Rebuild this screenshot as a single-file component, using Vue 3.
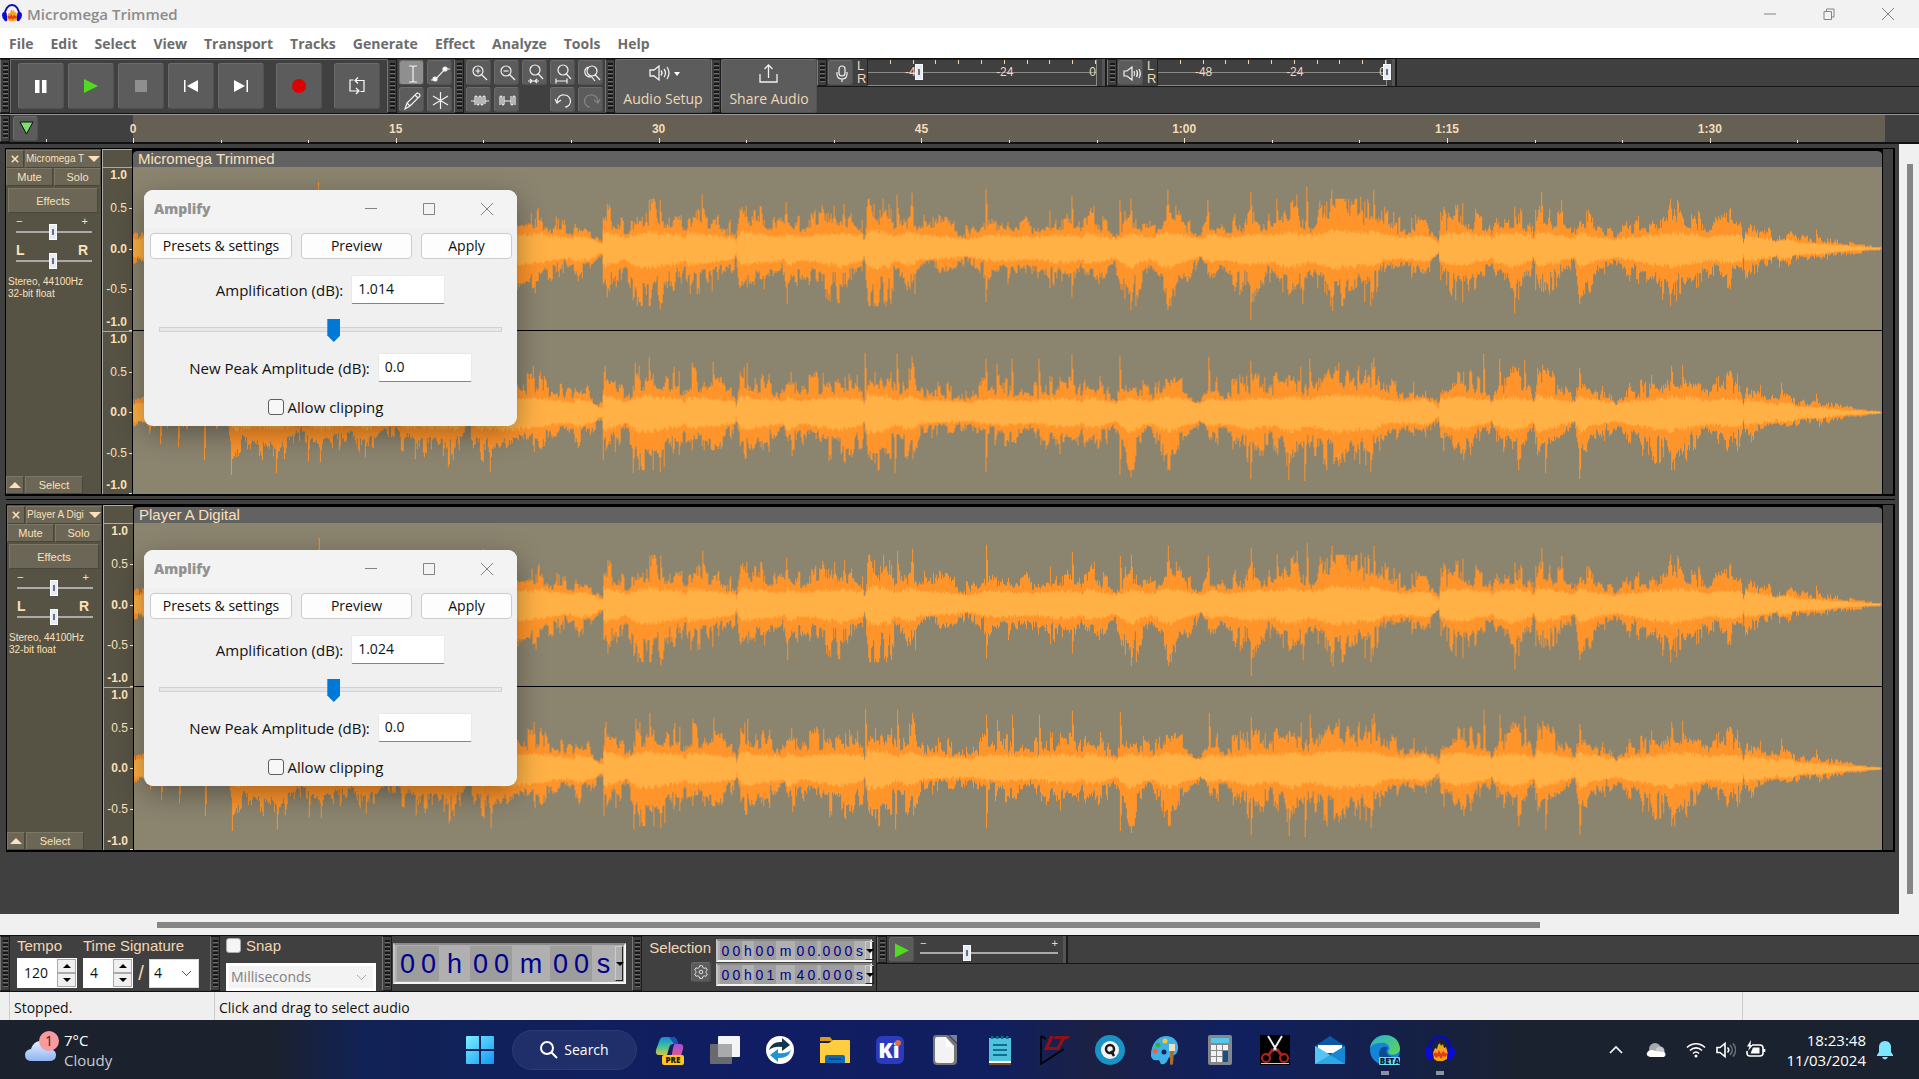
<template>
  <div class="desktop">
    <header class="title-bar">
      <svg class="app-icon" viewBox="0 0 30 30" v-html="icons.audacity"></svg>
      <h1 class="title">Micromega Trimmed</h1>
      <div class="window-buttons">
        <button aria-label="Minimize"><svg viewBox="0 0 12 12"><path d="M0 6h12" /></svg></button>
        <button aria-label="Restore"><svg viewBox="0 0 12 12"><path d="M1 3.500h7.500v8H1zM3.500 3V1h7.500v8H9" /></svg></button>
        <button aria-label="Close"><svg viewBox="0 0 12 12"><path d="M0 0l12 12M12 0L0 12" /></svg></button>
      </div>
    </header>

    <nav class="menu">
      <button v-for="item in menu" :key="item">{{ item }}</button>
    </nav>

    <section class="dock dock-top">
      <div class="grip"></div>
      <div class="bar transport">
        <button v-for="b in transport" :key="b.name" :aria-label="b.name" :class="b.name">
          <svg viewBox="0 0 24 24" v-html="b.svg"></svg>
        </button>
      </div>
      <div class="grip"></div>
      <div class="bar tools tools-two">
        <button v-for="t in tools" :key="t.name" :aria-label="t.name" :class="{ active: t.active }">
          <svg viewBox="0 0 25 25" v-html="t.svg"></svg>
        </button>
      </div>
      <div class="grip"></div>
      <div class="bar tools tools-five">
        <template v-for="t in editTools" :key="t.name">
          <span v-if="!t.svg"></span>
          <button v-else :aria-label="t.name" :class="{ disabled: t.disabled }">
            <svg viewBox="0 0 25 25" v-html="t.svg"></svg>
          </button>
        </template>
      </div>
      <div class="grip"></div>
      <button class="wide-button">
        <svg viewBox="0 0 40 24"><g v-html="speaker"></g><path class="solid" d="M31 11h6l-3 4z" /></svg>
        <span>Audio Setup</span>
      </button>
      <div class="grip"></div>
      <button class="wide-button">
        <svg viewBox="0 0 40 24"><path d="M11 13v8h17v-8M19.500 17V4M15.500 8l4-4 4 4" /></svg>
        <span>Share Audio</span>
      </button>
      <div class="meters">
        <div v-for="m in meters" :key="m.name" class="meter">
          <div class="grip"></div>
          <button class="meter-button" :aria-label="m.name"><svg viewBox="0 0 25 25" v-html="m.svg"></svg></button>
          <div class="channels"><span>L</span><span>R</span></div>
          <div class="meter-scale">
            <span v-for="n in 10" :key="n" class="meter-cell">
              <b v-if="meterLabels[n]">{{ meterLabels[n] }}</b>
            </span>
            <input type="range" min="0" max="100" :value="m.value" :aria-label="m.name + ' level'" />
          </div>
          <div class="meter-end"></div>
        </div>
      </div>
    </section>

    <section class="timeline">
      <div class="grip"></div>
      <button class="pin" aria-label="Playhead">
        <svg viewBox="0 0 25 25"><path d="M6 5h13l-6.500 12z" /></svg>
      </button>
      <div class="pre-roll"></div>
      <div class="time-scale">
        <div v-for="n in 20" :key="n" class="time-cell" :class="{ major: n % 3 === 1 }">
          <span v-if="n % 3 === 1">{{ times[(n - 1) / 3] }}</span>
        </div>
      </div>
      <div class="post-roll"></div>
    </section>

    <main class="workspace">
      <div class="tracks">
        <article v-for="track in tracks" :key="track.name" class="track">
          <div class="panel">
            <div class="panel-row">
              <button class="close" aria-label="Close track">
                <svg viewBox="0 0 10 10"><path d="M1 1l8 8M9 1L1 9" /></svg>
              </button>
              <button class="name"><span>{{ track.short }}</span><i></i></button>
            </div>
            <div class="panel-row">
              <button class="half">Mute</button>
              <button class="half">Solo</button>
            </div>
            <button class="effects">Effects</button>
            <div class="slider-labels"><span>−</span><span>+</span></div>
            <input class="knob" type="range" value="48" aria-label="Gain" />
            <div class="slider-labels pan"><span>L</span><span>R</span></div>
            <input class="knob" type="range" value="48" aria-label="Pan" />
            <p class="info">Stereo, 44100Hz<br />32-bit float</p>
            <div class="panel-row panel-foot">
              <button class="collapse" aria-label="Collapse"><i></i></button>
              <button class="select">Select</button>
            </div>
          </div>
          <div class="ruler">
            <div class="ruler-top"></div>
            <div v-for="c in 2" :key="c" class="ruler-scale">
              <span v-for="v in levels" :key="v" :class="{ strong: !v.includes('.5') }">{{ v }}</span>
            </div>
          </div>
          <div class="clip">
            <h2 class="clip-name">{{ track.name }}</h2>
            <svg v-for="(w, i) in waves" :key="i" class="wave" viewBox="0 -82 1750 164" preserveAspectRatio="none">
              <path class="peak" :d="w.peak" />
              <path class="rms" :d="w.rms" />
            </svg>
          </div>
        </article>
      </div>
      <div class="v-scroll"><div class="v-thumb"></div></div>
    </main>
    <div class="h-scroll"><div class="h-thumb"></div></div>

    <section class="dock dock-bottom">
      <div class="grip"></div>
      <div class="bar signature">
        <div class="field">
          <label for="tempo">Tempo</label>
          <div class="spin tempo">
            <input id="tempo" type="text" value="120" />
            <div class="arrows"><button aria-label="Up"><i></i></button><button aria-label="Down"><i class="down"></i></button></div>
          </div>
        </div>
        <div class="field">
          <label for="beats">Time Signature</label>
          <div class="spin-row">
            <div class="spin">
              <input id="beats" type="text" value="4" />
              <div class="arrows"><button aria-label="Up"><i></i></button><button aria-label="Down"><i class="down"></i></button></div>
            </div>
            <span class="slash">/</span>
            <select class="combo" aria-label="Note value"><option>4</option></select>
          </div>
        </div>
      </div>
      <div class="grip"></div>
      <div class="bar snap">
        <label><input type="checkbox" /><span>Snap</span></label>
        <select class="combo" disabled aria-label="Snap to"><option>Milliseconds</option></select>
      </div>
      <div class="grip"></div>
      <div class="bar clock">
        <div class="time-field large">
          <span v-for="(c, i) in clock" :key="i" :class="c.kind">{{ c.text }}</span>
          <button aria-label="Format"><i class="down"></i></button>
        </div>
      </div>
      <div class="grip"></div>
      <div class="bar selection">
        <div class="selection-side">
          <span>Selection</span>
          <button aria-label="Selection settings">
            <svg viewBox="0 0 20 20"><path :d="gear" /><circle cx="10" cy="10" r="2" /></svg>
          </button>
        </div>
        <div class="selection-times">
          <div v-for="(row, r) in selection" :key="r" class="time-field small">
            <span v-for="(c, i) in row" :key="i" :class="c.kind">{{ c.text }}</span>
            <button aria-label="Format"><i class="down"></i></button>
          </div>
        </div>
      </div>
      <div class="play-speed">
        <div class="play-row">
          <div class="grip"></div>
          <button class="small-play" aria-label="Play at speed"><svg viewBox="0 0 25 25"><path d="M5 5.500v14l14-7z" /></svg></button>
          <div class="speed">
            <div class="slider-labels"><span>−</span><span>+</span></div>
            <input class="knob" type="range" value="33" aria-label="Playback speed" />
          </div>
          <div class="meter-end"></div>
        </div>
      </div>
    </section>

    <footer class="status">
      <span class="status-a">Stopped.</span>
      <span class="status-b">Click and drag to select audio</span>
      <span class="status-c"></span>
    </footer>

    <footer class="taskbar">
      <div class="weather">
        <svg viewBox="0 0 36 36" v-html="icons.weather"></svg>
        <p>7°C<br /><span>Cloudy</span></p>
      </div>
      <div class="apps">
        <button aria-label="Start"><svg viewBox="0 0 30 30" v-html="icons.start"></svg></button>
        <button class="search">
          <svg viewBox="0 0 18 18"><circle cx="7" cy="7" r="6" /><path d="M11.500 11.500L17 17" /></svg>
          <span>Search</span>
        </button>
        <button v-for="a in apps" :key="a" :aria-label="a" :class="{ running: a === 'edge' || a === 'audacity' }">
          <svg viewBox="0 0 30 30" v-html="icons[a]"></svg>
        </button>
      </div>
      <div class="tray">
        <svg viewBox="0 0 20 20"><path d="M4 13l6-6 6 6" /></svg>
        <svg viewBox="0 0 20 20" class="cloud"><circle cx="9" cy="9" r="6" fill="#a9a9ad" /><circle cx="14" cy="11" r="4.500" fill="#c8c8cc" /><path d="M1 13c1-3 5-4 8-2l9 1c3 2 1 5-1 5H5c-3 0-5-2-4-4z" fill="#fff" /></svg>
        <svg viewBox="0 0 20 20"><path d="M1 7.500c5-5 13-5 18 0M4 10.500c3.500-3.500 8.500-3.500 12 0M7 13.500c2-2 4-2 6 0" /><circle class="fill" cx="10" cy="16" r="1.500" /></svg>
        <svg viewBox="0 0 20 20"><path d="M1 7.500h3l5-4v13l-5-4H1zM11.500 7.500c1.500 1.500 1.500 3.500 0 5" /><path class="faint" d="M14 5c3 3 3 7 0 10M17 3.500c3.500 4 3.500 9 0 13" /></svg>
        <svg viewBox="0 0 20 20"><path d="M6 5h8q3 0 3 3v5q0 3-3 3H4q-3 0-3-3v-2M18.500 9v3" /><path class="fill" d="M7 7.500h6.500v6H4.500zM5 0L1 6.500h2.500L2 11l5-6H4.500z" /></svg>
        <p>18:23:48<br />11/03/2024</p>
        <svg viewBox="0 0 20 20" class="bell"><path d="M10 1c4 0 6 3 6 6v5l2 3v1H2v-1l2-3V7c0-3 2-6 6-6zM7 17h6q-3 5-6 0z" /></svg>
      </div>
    </footer>

    <form v-for="(d, i) in dialogs" :key="i" class="dialog" :class="'dialog-' + i">
      <div class="dialog-title">
        <strong>Amplify</strong>
        <button type="button" aria-label="Minimize"><svg viewBox="0 0 12 12"><path d="M0 5.500h12" /></svg></button>
        <button type="button" aria-label="Maximize"><svg viewBox="0 0 12 12"><path d="M.5.5h11v11H.5z" /></svg></button>
        <button type="button" aria-label="Close"><svg viewBox="0 0 12 12"><path d="M0 0l12 12M12 0L0 12" /></svg></button>
      </div>
      <div class="dialog-buttons">
        <button type="button">Presets &amp; settings</button>
        <button type="button">Preview</button>
        <button type="button">Apply</button>
      </div>
      <label class="dialog-row">Amplification (dB): <input type="text" :value="d.gain" /></label>
      <input class="gain" type="range" value="51" aria-label="Gain" />
      <label class="dialog-row">New Peak Amplitude (dB): <input type="text" value="0.0" /></label>
      <label class="dialog-check"><input type="checkbox" /><span>Allow clipping</span></label>
    </form>
  </div>
</template>

<script setup>
const menu = ['File', 'Edit', 'Select', 'View', 'Transport', 'Tracks', 'Generate', 'Effect', 'Analyze', 'Tools', 'Help']
const times = ['0', '15', '30', '45', '1:00', '1:15', '1:30']
const levels = ['1.0', '0.5', '0.0', '-0.5', '-1.0']
const meterLabels = { 2: '-48', 6: '-24', 10: '0' }

const transport = [
  { name: 'pause', svg: '<path fill="#fff" d="M6 6h4.500v13H6zM13 6h4.500v13H13z"/>' },
  { name: 'play', svg: '<path fill="#52d921" d="M5 5v14l14-7z"/>' },
  { name: 'stop', svg: '<path fill="#8f8f8f" d="M6 6h12v12H6z"/>' },
  { name: 'start', svg: '<path fill="#fff" d="M5 6h1.500v12H5zM19 6v12L8 12z"/>' },
  { name: 'end', svg: '<path fill="#fff" d="M17.500 6H19v12h-1.500zM5 6v12l11-6z"/>' },
  { name: 'record', svg: '<circle cx="12" cy="12" r="7" fill="#dc0000"/>' },
  { name: 'loop', svg: '<path fill="none" stroke="#fff" stroke-width="1.200" d="M8.500 6H5v11h8M11 14l3 3-3 3M15.500 17.500H19v-11h-8M13 3.500l-3 3 3 3"/>' }
]

const tools = [
  { name: 'Selection', active: true, svg: '<path d="M9 5h3l1 1 1-1h3M13 6v14M9 21h3l1-1 1 1h3"/>' },
  { name: 'Envelope', svg: '<path d="M3 19h4L17 8h5"/><circle cx="7" cy="18" r="2" fill="#fff"/><circle cx="17" cy="8" r="2" fill="#fff"/>' },
  { name: 'Draw', svg: '<path d="M5 21l2-6L17 5q3 0 3 3L10 18zM7 15l3 3M15 7l3 3"/>' },
  { name: 'Multi', svg: '<path d="M12.500 4v17M5 8l15 9M20 8L5 17"/>' }
]

const lens = '<circle cx="11" cy="10" r="5"/><path d="M14.500 13.500L20 19"/>'
const smallLens = '<circle cx="12" cy="9" r="5"/><path d="M15 12.500l5 5.500"/>'
const editTools = [
  { name: 'Zoom in', svg: lens + '<path d="M8.500 10h5M11 7.500v5"/>' },
  { name: 'Zoom out', svg: lens + '<path d="M8.500 10h5"/>' },
  { name: 'Fit selection', svg: smallLens + '<path d="M5 20h11M7 18l2 2-2 2M14 18l-2 2 2 2"/>' },
  { name: 'Fit project', svg: smallLens + '<path d="M5 20h11M5 17.500v5M16 17.500v5"/>' },
  { name: 'Zoom toggle', svg: '<circle cx="13" cy="10" r="5"/><path d="M9 6q-4 2-3 6t6 4M16 13.500l5 5.500M12 15l4 5"/>' },
  { name: 'Trim', svg: '<path d="M4 13h4M18 13h4M8 17V9q1-2 2 0v7q1 2 2 0V9q1-2 2 0v7q1 2 2 0V9q1-2 2 0v7"/>' },
  { name: 'Silence', svg: '<path d="M5 17V9q1-2 2 0v7q1 2 2 0V8v5h7V8v8q1 2 2 0V9q1-2 2 0v8"/>' },
  { name: 'gap' },
  { name: 'Undo', svg: '<path d="M6 14c0-5 4-8 8-7 6 1 7 8 3 11-1 1-2 1-3 1M4 11l2 4 4-3"/>' },
  { name: 'Redo', disabled: true, svg: '<path d="M19 14c0-5-4-8-8-7-6 1-7 8-3 11 1 1 2 1 3 1M21 11l-2 4-4-3"/>' }
]

const speaker = '<path d="M7 9h4l5-4v14l-5-4H7zM18 9.500q2 2.500 0 5M21 8q3 4 0 8M24 6q4 6 0 12"/>'
const meters = [
  { name: 'Record', value: 19, svg: '<rect x="10" y="5" width="6" height="10" rx="3"/><path d="M8 11v2q0 5 5 5t5-5v-2M13 18v3"/>' },
  { name: 'Playback', value: 100, svg: '<path d="M5 10h3l5-4v13l-5-4H5zM15 10q1 2.500 0 5M17.500 9q2 3.500 0 7M20 8q2.500 4.500 0 9"/>' }
]

const tracks = [
  { name: 'Micromega Trimmed', short: 'Micromega T' },
  { name: 'Player A Digital', short: 'Player A Digi' }
]
const dialogs = [{ gain: '1.014' }, { gain: '1.024' }]

// Split a time string into digit cells and unit cells
function cells(text) {
  return [...text].map(c => ({ text: c, kind: /\d/.test(c) ? 'digit' : c === '.' ? 'dot' : 'unit unit-' + c }))
}
const clock = cells('00h00m00s')
const selection = [cells('00h00m00.000s'), cells('00h01m40.000s')]

const gear = 'M8.500 3h3l.5 2 1.500 1 2-.7 1.500 2.600-1.500 1.500v1.400l1.500 1.500-1.500 2.500-2-.6-1.500.9-.5 2h-3l-.5-2-1.500-.9-2 .6L3 12.300l1.500-1.500V9.400L3 7.900l1.500-2.600 2 .7L8 5z'

// Loudness envelope: [x, above, below], in units of the wave viewBox
const envelope = [
  [0, 15, 14], [12, 18, 16], [30, 12, 12], [95, 16, 14], [99, 36, 44], [125, 32, 34], [145, 28, 40], [170, 20, 22],
  [188, 38, 42], [215, 28, 24], [232, 30, 38], [262, 20, 20], [272, 30, 34], [300, 32, 36], [320, 36, 42], [336, 20, 18],
  [345, 32, 40], [375, 40, 42], [387, 30, 38], [407, 32, 30], [427, 23, 20], [440, 16, 18], [442, 28, 30], [457, 20, 20],
  [466, 9, 9], [469, 9, 9], [470, 38, 42],
  [482, 34, 32], [492, 19, 20], [504, 32, 48], [517, 40, 50], [527, 34, 42], [547, 32, 32], [552, 18, 20], [554, 36, 40],
  [567, 35, 34], [582, 28, 30], [601, 20, 19], [603, 9, 8], [608, 40, 42], [632, 29, 30], [651, 22, 22], [654, 34, 42],
  [667, 23, 24], [682, 30, 28], [707, 34, 45],
  [729, 26, 26], [731, 12, 12], [735, 45, 52], [757, 35, 45], [761, 24, 26], [779, 40, 42], [787, 27, 20], [812, 23, 17],
  [837, 16, 12],
  [852, 28, 22], [872, 28, 26], [902, 22, 20], [923, 29, 32], [942, 28, 30], [950, 20, 20], [953, 34, 36], [967, 28, 30],
  [982, 14, 14], [997, 34, 52],
  [1017, 20, 20], [1035, 38, 50], [1052, 28, 30], [1067, 14, 12], [1077, 32, 30], [1092, 22, 24], [1117, 30, 40],
  [1140, 30, 28], [1157, 38, 50], [1177, 28, 30], [1202, 46, 50], [1232, 38, 42], [1239, 40, 46], [1252, 30, 22],
  [1272, 22, 19], [1292, 26, 26], [1306, 8, 7], [1308, 30, 30], [1327, 36, 42], [1342, 29, 30], [1357, 26, 20],
  [1359, 14, 14], [1363, 30, 30],
  [1382, 34, 48], [1397, 28, 26], [1401, 14, 12], [1405, 42, 48], [1424, 30, 30], [1442, 18, 14], [1447, 38, 50],
  [1460, 26, 28], [1482, 13, 14], [1497, 22, 24], [1522, 28, 38], [1539, 36, 46], [1557, 34, 36], [1577, 22, 22],
  [1597, 32, 32], [1609, 26, 26], [1611, 10, 10], [1613, 26, 28], [1632, 18, 16], [1645, 11, 11], [1647, 16, 18],
  [1667, 10, 10], [1687, 9, 10], [1707, 6, 6], [1727, 4, 4], [1740, 2, 2], [1750, 1, 1]
]
const spikes = [
  {
    up: { 185: 67, 349: 56, 516: 49, 527: 49, 569: 54, 653: 47, 764: 54, 779: 56, 853: 60, 939: 53, 987: 49, 998: 50, 1035: 59, 1075: 49, 1118: 57, 1144: 50, 1164: 54, 1174: 62, 1199: 59, 1228: 52, 1241: 59, 1323: 44, 1382: 42, 1409: 57, 1429: 49, 1597: 39, 1684: 19 },
    down: { 527: 61, 737: 58, 853: 54, 939: 49, 998: 62, 1035: 62, 1118: 72, 1170: 56, 1200: 63, 1238: 58, 1382: 65, 1447: 56 }
  },
  {
    up: { 348: 56, 400: 47, 502: 50, 516: 56, 580: 51, 732: 60, 764: 59, 779: 56, 853: 54, 864: 49, 879: 54, 906: 54, 939: 58, 987: 57, 1076: 56, 1118: 52, 1177: 54, 1241: 55, 1351: 59, 1367: 54, 1392: 53, 1447: 45, 1550: 48, 1597: 42, 1649: 30, 1684: 19 },
    down: { 27: 32, 45: 35, 71: 48, 98: 63, 143: 61, 175: 49, 187: 50, 232: 45, 320: 48, 357: 60, 500: 61, 527: 60, 762: 61, 853: 60, 987: 63, 998: 65, 1118: 67, 1156: 68, 1172: 69, 1238: 60, 1413: 61, 1447: 67, 1542: 58 }
  }
]

function random(seed) {
  let s = seed
  return () => {
    s = (s * 1664525 + 1013904223) % 4294967296
    return s / 4294967296
  }
}

function level(x, side) {
  let i = 1
  while (envelope[i][0] < x) i++
  const a = envelope[i - 1]
  const b = envelope[i]
  const t = (x - a[0]) / (b[0] - a[0])
  return a[side] + (b[side] - a[side]) * t
}

function outline(top, bottom) {
  let d = 'M0 0'
  top.forEach((v, x) => { d += `V${-v}H${x + 1}` })
  for (let x = bottom.length - 1; x >= 0; x--) d += `V${bottom[x]}H${x}`
  return d + 'Z'
}

function makeWave(seed, spike) {
  const next = random(seed)
  const peaks = [[], []]
  const rms = [[], []]
  const swell = [1, 1]
  for (let x = 0; x < 1750; x++) {
    const turn = next() > 0.6
    const sides = [spike.up, spike.down]
    const burst = next() > 0.93 ? 1.35 : 1
    for (let s = 0; s < 2; s++) {
      const base = level(x, s + 1)
      const roll = next()
      if (turn) swell[s] = 0.6 + roll * 0.5 + (roll > 0.8 ? 0.15 : 0)
      const limit = Math.min(base * 1.4, s ? 58 : 50)
      let v = Math.min(base * swell[s] * burst * (0.88 + next() * 0.24), limit)
      if (sides[s][x]) v = sides[s][x]
      else if (sides[s][x - 1]) v = Math.max(v, sides[s][x - 1] * 0.75)
      peaks[s].push(Math.round(v))
      rms[s].push(Math.round(Math.min(v * 0.9, (base * 0.28 + 5) * (base < 12 ? base / 14 : 1) * (0.88 + next() * 0.28))))
    }
  }
  return { peak: outline(peaks[0], peaks[1]), rms: outline(rms[0], rms[1]) }
}
const waves = [makeWave(17, spikes[0]), makeWave(91, spikes[1])]

const apps = ['copilot', 'taskview', 'sync', 'folder', 'kicad', 'office', 'notepad', 'spice', 'quiet', 'paint', 'calc', 'snip', 'mail', 'edge', 'audacity']
const icons = {
  weather: '<defs><linearGradient id="wc" x2="0" y2="1"><stop stop-color="#e6efff"/><stop offset="1" stop-color="#8fb4f2"/></linearGradient></defs><path fill="url(#wc)" d="M8 31q-7 0-7-6 0-5 6-6 3-9 11-8 7 1 8 8 6 1 6 6 0 6-7 6z"/><circle cx="25" cy="11" r="10" fill="#f99a9f"/><text x="25" y="16" font-size="14" text-anchor="middle" fill="#3b1d22" font-family="Open Sans, sans-serif">1</text>',
  start: '<defs><linearGradient id="st" x2="1" y2="1"><stop stop-color="#7df0ff"/><stop offset="1" stop-color="#1295f5"/></linearGradient></defs><path fill="url(#st)" d="M2 1h12v13H1V2q0-1 1-1zM16 1h12q1 0 1 1v12H16zM1 16h13v13H2q-1 0-1-1zM16 16h13v12q0 1-1 1H16z"/>',
  copilot: '<defs><linearGradient id="ca" x2="0" y2="1"><stop stop-color="#168bd8"/><stop offset=".5" stop-color="#3cbf9d"/><stop offset="1" stop-color="#d3c844"/></linearGradient><linearGradient id="cb" x2="0" y2="1"><stop stop-color="#a34de0"/><stop offset="1" stop-color="#f0606c"/></linearGradient></defs><path fill="url(#ca)" d="M9 2h9q3 0 4 4l1 3h-5q-3 0-4 4l-2 7H4q-4 0-3-5l3-8q1-5 5-5z"/><path fill="#1b50b8" d="M14 2h4q3 0 4 4l1 3h-4z"/><path fill="url(#cb)" d="M20 9h5q4 0 3 5l-2 7q-1 3-4 3h-8q2-1 3-5l1-6q1-4 2-4z"/><rect x="7" y="20" width="22" height="10" rx="2" fill="#ffc524"/><text x="18" y="28" font-size="8" font-weight="800" text-anchor="middle" font-family="Open Sans, sans-serif" fill="#201800">PRE</text>',
  taskview: '<rect x="8" y="1" width="22" height="21" rx="1" fill="#f4f4f5"/><rect y="9" width="22" height="20" rx="1" fill="#686a70"/><path fill="#a9aaae" d="M8 9h14v13H8z"/>',
  sync: '<circle cx="15" cy="15" r="14" fill="#fff"/><path fill="#12374a" d="M4 15Q7 6 17 7V3l8 7-8 6v-4q-8-1-13 3z"/><path fill="#1e96d3" d="M26 15q-3 9-13 8v4l-8-7 8-6v4q8 1 13-3z"/>',
  folder: '<path fill="#dc9a10" d="M0 3q0-1 1-1h9l3 4H0z"/><path fill="#ffcd3d" d="M0 8h9l4-3h16q1 0 1 1v22H0z"/><path fill="#1268b8" d="M5 28v-6q0-2 2-2h16q2 0 2 2v6z"/><path fill="#0b4d93" d="M9 23h12v2H9z"/>',
  kicad: '<rect x="1" y="1" width="28" height="28" rx="6" fill="#2c3bbd"/><text x="14" y="23" font-size="21" font-weight="800" text-anchor="middle" font-family="Open Sans, sans-serif" fill="#fff">Ki</text><circle cx="23" cy="8" r="3" fill="#dc7040"/>',
  office: '<path fill="#747679" d="M6 0h12l9 9v17q0 4-4 4H7q-4 0-4-4V3q0-3 3-3z"/><path fill="#f3f3f3" d="M7 2h9l8 9v14q0 3-3 3H8q-3 0-3-3V4q0-2 2-2z"/><path fill="#fff" d="M16 4l7 8h-7z"/><path fill="#7b7f88" d="M19 0h8v8z"/>',
  notepad: '<path fill="#7b4a26" d="M4 27h22v3H4z"/><path fill="#fff" d="M4 25h22v3H4z"/><path fill="#4fc3dd" d="M4 3h22v23H4z"/><path stroke="#116a8a" stroke-width="3" stroke-dasharray="2.500 2.500" d="M6 2.500h19" /><path stroke="#11708f" stroke-width="2" d="M8 10h14M8 15h14M8 20h14"/>',
  spice: '<path fill="none" stroke="#000" stroke-width="1.600" d="M1 1v28l23-15M1 1l5 3"/><path fill="#8f1018" d="M10 1h4L9 12h6l-1 3H4zM15 1h15l-2 3h-3l-6 11h-7l1-3h4l4-8h-7z"/>',
  quiet: '<circle cx="15" cy="15" r="15" fill="#1992c4"/><circle cx="15" cy="15" r="9" fill="#f2f2f2"/><circle cx="15" cy="14" r="4" fill="none" stroke="#191919" stroke-width="2.500"/><path stroke="#191919" stroke-width="2.500" d="M16 16l3 5"/>',
  paint: '<path fill="#3fb1e6" d="M16 1c8 0 13 6 12 13-1 8-8 6-10 10-1 4-4 6-7 5-1-1-1-4-3-4-4 1-7-1-7-5C1 10 7 1 16 1z"/><circle cx="14" cy="17" r="2.500" fill="#10275f"/><circle cx="5" cy="16" r="2.500" fill="#e9663b"/><circle cx="8" cy="10" r="2.500" fill="#38ac43"/><circle cx="15" cy="6" r="2.500" fill="#f2c935"/><path fill="#a66b38" d="M20 16h4l-1 13q-2 2-3 0z"/><path fill="#ece0c3" d="M19 9h6v7h-6z"/>',
  calc: '<rect x="3" width="24" height="30" rx="2" fill="#84878c"/><path fill="#55c8e8" d="M6 3h18v5H6z"/><path fill="#f1f1f2" d="M6 10h5v5H6zM12 10h5v5h-5zM18 10h5v5h-5zM6 16h5v5H6zM12 16h5v5h-5zM6 22h5v5H6zM12 22h5v5h-5z"/><path fill="#184e8c" d="M18 16h5v11h-5z"/>',
  snip: '<path d="M0 0h30v30H0z"/><path stroke="#eee" stroke-width="2" d="M8 1l9 15M22 1l-9 15"/><path stroke="#b91e1e" stroke-width="3" d="M13 14l-5 7M17 14l5 7"/><g fill="none" stroke="#b91e1e" stroke-width="2"><circle cx="6" cy="23" r="4"/><circle cx="24" cy="23" r="4"/></g><path stroke="#ccc" d="M1 28.500h28"/>',
  mail: '<path fill="#0c58a4" d="M0 11L15 1l15 10v8H0z"/><path fill="#fff" d="M3 10h24v8H3z"/><path fill="#2ca8e6" d="M0 11l15 9 15-9v18H0z"/><path fill="#56c5f5" d="M0 29l15-9-15-9z"/><path fill="#1787d4" d="M30 29L15 20l15-9z"/>',
  edge: '<defs><linearGradient id="ed" x2="1" y2="1"><stop stop-color="#25b5cf"/><stop offset="1" stop-color="#62d553"/></linearGradient></defs><circle cx="15" cy="15" r="15" fill="#1684d6"/><path fill="url(#ed)" d="M0 14C1-3 28-5 30 13c0 8-11 8-12 4 4-5-1-10-7-9-6 0-10 2-11 6z"/><path fill="#0b4b94" d="M9 19c0-7 6-9 9-6-3 2-2 8 5 9-3 6-14 4-14-3z"/><rect x="9" y="22" width="21" height="8" rx="1" fill="#71dff4"/><text x="20" y="29" font-size="8" font-weight="800" text-anchor="middle" font-family="Open Sans, sans-serif" fill="#08202a">BETA</text>',
  audacity: '<path fill="#f7a21c" d="M8 18l2-5 2 1 1-4 2-2 1 3 2-2 1 4 2-1 2 6-1 6-4 2h-6l-3-2z"/><path fill="#e33b16" d="M8 19l3-2 1 2 2-4 2 4 2-3 2 2 3 1-3 3-2-1-2 3-2-3-3 2z"/><path fill="none" stroke="#0b0bb6" stroke-width="3" d="M4 18C4-4 26-4 26 18"/><path fill="#0b0bd6" d="M1 13q5-3 6 1l1 10q-1 3-4 1-6-6-3-12zM29 13q-5-3-6 1l-1 10q1 3 4 1 6-6 3-12z"/>'
}
</script>

<style>
body {
  margin: 0;
}
</style>

<style scoped>
* {
  box-sizing: border-box;
}

.desktop {
  position: relative;
  display: flex;
  flex-direction: column;
  min-height: 100vh;
  background: #404040;
  font-family: "Open Sans", "Noto Sans", sans-serif;
  font-size: 14px;
  line-height: 20px;
}

button,
input,
select {
  margin: 0;
  padding: 0;
  border: 0;
  font: inherit;
  color: inherit;
  background: none;
}

svg {
  display: block;
}

p {
  margin: 0;
}

.title-bar {
  display: flex;
  align-items: center;
  gap: 5px;
  height: 28px;
  padding-left: 2px;
  background: #f2f2f2;
}

.app-icon {
  width: 20px;
  height: 20px;
}

.title {
  flex: 1;
  margin: 0;
  font-size: 15px;
  font-weight: 600;
  color: #8c8c8c;
}

.window-buttons {
  display: flex;
  padding-right: 2px;
}

.window-buttons button {
  display: grid;
  place-items: center;
  width: 59px;
  height: 28px;
}

.window-buttons svg,
.dialog-title svg {
  width: 12px;
  height: 12px;
  fill: none;
  stroke: #848484;
}

.menu {
  display: flex;
  gap: 17px;
  height: 30px;
  padding: 2px 0 0 9px;
  background: #fff;
  font-weight: 700;
  color: #6c6c6c;
}

.dock {
  display: flex;
  align-items: flex-start;
  border-top: 1px solid #111;
  border-bottom: 1px solid #111;
  background: #404040;
}

.dock-top {
  height: 56px;
}

.grip {
  flex: none;
  align-self: stretch;
  width: 10px;
  border: 1px solid #1a1a1a;
  border-left-color: #777;
  background: repeating-linear-gradient(#171717 0 2px, #6b6b6b 2px 3px, #404040 3px 4px) center / 5px calc(100% - 6px) no-repeat;
}

.bar {
  flex: none;
  align-self: stretch;
}

.transport {
  display: flex;
  gap: 4px;
  width: 377px;
  padding: 3px 7px;
  border-top: 1px solid #6f6f6f;
  border-left: 1px solid #6f6f6f;
}

.transport button,
.tools button,
.wide-button,
.meter-button,
.pin,
.small-play,
.selection-side button {
  display: grid;
  place-items: center;
  border: 1px solid #525252;
  border-top-color: #6c6c6c;
  border-left-color: #6c6c6c;
  border-radius: 3px;
  background: #5c5c5c;
}

.transport button {
  width: 46px;
  height: 46px;
}

.transport .record,
.transport .loop {
  margin-left: 8px;
}

.transport svg {
  width: 24px;
  height: 24px;
}

.tools {
  display: grid;
  grid-auto-rows: 25px;
  gap: 2px 3px;
  padding: 1px 2px 0;
}

.tools-two {
  grid-template-columns: repeat(2, 25px);
}

.tools-five {
  grid-template-columns: repeat(5, 25px);
}

.tools svg,
.meter-button svg,
.small-play svg {
  width: 25px;
  height: 25px;
  fill: none;
  stroke: #f1f1f1;
  stroke-width: 1.2;
}

.tools .active {
  background: #8f8f8f;
}

.tools .disabled svg {
  stroke: #858585;
}

.wide-button {
  flex: none;
  grid-template-rows: 26px 26px;
  width: 96px;
  height: 54px;
  color: #f0d7b5;
}

.wide-button svg {
  width: 40px;
  height: 24px;
  fill: none;
  stroke: #f1f1f1;
  stroke-width: 1.3;
}

.wide-button .solid {
  fill: #fff;
  stroke: none;
}

.meters {
  display: flex;
  flex: 1;
  height: 28px;
  border-bottom: 1px solid #171717;
}

.meter {
  display: flex;
}

.meter-button {
  width: 25px;
  height: 25px;
  margin: 1px 2px 1px 1px;
}

.channels {
  display: flex;
  flex-direction: column;
  width: 12px;
  padding-left: 2px;
  font: 13px/13px "Liberation Sans", sans-serif;
  color: #f0d7b5;
}

.meter-scale {
  position: relative;
  display: grid;
  grid-template-columns: repeat(10, minmax(0, 1fr));
  width: 230px;
  border: 1px solid #222;
  border-bottom-color: #8b8b8b;
  border-right-color: #8b8b8b;
  background: linear-gradient(#8b8b8b, #8b8b8b) 0 12px / 100% 1px no-repeat;
}

.meter-cell {
  display: flex;
  justify-content: flex-end;
  background: linear-gradient(#f0d7b5, #f0d7b5) 100% 0 / 1px 4px no-repeat;
}

.meter-cell b {
  flex: none;
  width: 40px;
  margin-right: -20px;
  font: 12px/25px "Liberation Sans", sans-serif;
  text-align: center;
  color: #f0d7b5;
}

.meter-cell:nth-child(10) b {
  margin-right: 0;
  text-align: right;
}

.meter-scale input {
  position: absolute;
  top: 4px;
  left: 5px;
  width: 100%;
}

.meter-end {
  width: 10px;
  border-right: 2px solid #1c1c1c;
  box-shadow: inset -3px 0 #555;
}

input[type="range"] {
  appearance: none;
  height: 16px;
}

.knob::-webkit-slider-runnable-track {
  height: 16px;
  background: linear-gradient(#aaa, #aaa) center / 100% 2px no-repeat;
}

.knob::-webkit-slider-thumb,
.meter-scale input::-webkit-slider-thumb {
  appearance: none;
  width: 8px;
  height: 16px;
  border: 1px solid #fff;
  background: linear-gradient(#6c7180, #6c7180) center / 2px 6px no-repeat, #e6ebf7;
}

.timeline {
  display: flex;
  height: 30px;
  border-top: 1px solid #999;
  border-bottom: 2px solid #111;
}

.pin {
  width: 25px;
  height: 25px;
  margin: 1px 0 0 3px;
}

.pin svg {
  width: 25px;
  height: 25px;
  fill: #79e06e;
  stroke: #0a0a0a;
}

.pre-roll {
  width: 95px;
  background: linear-gradient(#f0d7b5, #f0d7b5) 8px 100% / 1px 3px no-repeat;
}

.time-scale {
  display: grid;
  flex: 1;
  grid-template-columns: repeat(20, minmax(0, 1fr));
  background: #655f54;
}

.time-cell {
  background: linear-gradient(#f0e2c8, #f0e2c8) 0 100% / 1px 3px no-repeat;
}

.time-cell.major {
  background-size: 1px 5px;
}

.time-cell span {
  display: block;
  width: 40px;
  margin-left: -20px;
  font: bold 12px/28px "Liberation Sans", sans-serif;
  text-align: center;
  color: #f5dcb9;
}

.post-roll {
  width: 34px;
}

.workspace {
  display: flex;
  flex: 1;
}

.tracks {
  display: flex;
  flex: 1;
  flex-direction: column;
  gap: 8px;
  padding: 4px 4px 0 5px;
}

.track {
  display: flex;
  height: 348px;
  border: 1px solid #000;
  border-right-width: 2px;
  border-bottom-width: 2px;
  font-family: "Liberation Sans", sans-serif;
  color: #fbe0ba;
}

.track + .track {
  margin-left: 1px;
  box-shadow: 0 -4px #404040, 0 -5px #000;
}

.panel {
  display: flex;
  flex-direction: column;
  width: 95px;
  padding: 1px 0 0;
  background: #565244;
  font-size: 11px;
  line-height: 14px;
}

.panel button {
  border: 1px solid #49463c;
  border-top-color: #7d7765;
  border-left-color: #7d7765;
  background: #6b6656;
}

.panel-row {
  display: flex;
  gap: 1px;
}

.panel .close {
  display: grid;
  place-items: center;
  width: 18px;
  height: 18px;
}

.close svg {
  width: 8px;
  height: 8px;
  fill: none;
  stroke: #fbe0ba;
  stroke-width: 2;
}

.panel .name {
  display: flex;
  flex: 1;
  align-items: center;
  min-width: 0;
}

.name span {
  flex: 1;
  font-size: 10px;
  text-align: left;
  white-space: nowrap;
}

.name i {
  flex: none;
  border: 6px solid transparent;
  border-top-color: #fbe0ba;
  border-bottom: 0;
}

.half {
  flex: 1;
  height: 18px;
  font-size: 11px;
  line-height: 12px;
}

.panel .effects {
  height: 25px;
  margin: 2px 3px 3px 2px;
  font-size: 11px;
}

.slider-labels {
  display: flex;
  justify-content: space-between;
  padding: 0 13px 0 10px;
  font-size: 11px;
  line-height: 10px;
}

.slider-labels.pan {
  padding-top: 5px;
  font-size: 14px;
  font-weight: bold;
}

.panel .knob {
  width: 76px;
  margin: -2px 0 0 10px;
}

.info {
  padding: 7px 0 0 2px;
  font-size: 10px;
  line-height: 12px;
}

.panel-foot {
  margin-top: auto;
}

.panel .collapse {
  display: grid;
  place-items: center;
  width: 18px;
  height: 18px;
}

.collapse i {
  border: 6px solid transparent;
  border-top: 0;
  border-bottom-color: #fbe0ba;
}

.select {
  width: 58px;
  font-size: 11px;
}

.ruler {
  display: flex;
  flex-direction: column;
  width: 31px;
  border-left: 1px solid #000;
  background: #565244;
}

.ruler-top {
  height: 18px;
  border-top: 1px solid #aaa;
  border-left: 1px solid #aaa;
}

.ruler-scale {
  display: grid;
  flex: 1;
  grid-template-rows: 1fr 2fr 2fr 2fr 1fr;
  align-items: center;
  border-top: 1px solid #aaa;
  border-left: 1px solid #aaa;
  font-size: 12px;
  line-height: 15px;
  text-align: right;
}

.ruler-scale span {
  padding-right: 5px;
  background: linear-gradient(#fbe0ba, #fbe0ba) 100% 50% / 3px 1px no-repeat;
}

.ruler-scale span:first-child {
  align-self: start;
  background: none;
}

.ruler-scale span:last-child {
  align-self: end;
  padding-bottom: 1px;
  background-position: 100% 100%;
}

.ruler-scale .strong {
  font-weight: bold;
}

.clip {
  display: flex;
  flex: 1;
  flex-direction: column;
  min-width: 0;
  margin-right: 10px;
  border-right: 1px solid #000;
  border-left: 1px solid #000;
  background: #000;
}

.clip-name {
  height: 18px;
  margin: 0;
  padding-left: 5px;
  border-top: 2px solid #000;
  border-radius: 5px 5px 0 0;
  background: #626262;
  font-size: 15px;
  font-weight: normal;
  line-height: 16px;
}

.wave {
  flex: 1;
  width: 100%;
  min-height: 0;
  background: #8b846f;
}

.wave + .wave {
  margin-top: 1px;
}

.peak {
  fill: #ff942b;
}

.rms {
  fill: #ffb145;
}

.v-scroll {
  width: 20px;
  padding: 20px 6px 20px 8px;
  background: #f0f0f0;
}

.v-thumb {
  height: 100%;
  background: #858585;
}

.h-scroll {
  height: 21px;
  padding: 8px 379px 7px 157px;
  background: #f0f0f0;
}

.h-thumb {
  height: 6px;
  background: #858585;
}

.dock-bottom {
  height: 57px;
  font-family: "Liberation Sans", sans-serif;
  font-size: 15px;
  color: #f0d7b5;
}

.signature {
  display: flex;
  gap: 6px;
  width: 200px;
  padding-left: 7px;
}

.field {
  display: flex;
  flex-direction: column;
  gap: 2px;
}

.spin-row {
  display: flex;
  align-items: center;
}

.spin {
  display: flex;
  width: 50px;
  height: 30px;
  padding: 1px;
  background: #fff;
  color: #111;
}

.spin.tempo {
  width: 60px;
}

.spin input {
  flex: 1;
  min-width: 0;
  padding-left: 6px;
}

.spin input,
.combo {
  font-family: "Open Sans", sans-serif;
  font-size: 14px;
}

.arrows {
  display: flex;
  flex-direction: column;
  width: 19px;
}

.arrows button {
  flex: 1;
  display: grid;
  place-items: center;
  border: 1px solid #aaa;
  background: #f0f0f0;
}

.arrows i {
  border: 4px solid transparent;
  border-top: 0;
  border-bottom-color: #000;
}

i.down {
  border: 4px solid transparent;
  border-top-color: #000;
  border-bottom: 0;
}

.arrows i.down {
  border-top: 4px solid #000;
  border-bottom: 0;
}

.slash {
  width: 16px;
  font-size: 20px;
  text-align: center;
}

.combo {
  --chevron: #555;
  appearance: none;
  width: 50px;
  height: 29px;
  padding-left: 4px;
  border: 1px solid #ddd;
  color: #111;
  background:
    linear-gradient(45deg, transparent 46%, var(--chevron) 46% 58%, transparent 58%) calc(100% - 11px) 50% / 5px 5px no-repeat,
    linear-gradient(-45deg, transparent 46%, var(--chevron) 46% 58%, transparent 58%) calc(100% - 7px) 50% / 5px 5px no-repeat,
    #fff;
}

.snap {
  display: flex;
  flex-direction: column;
  width: 162px;
  padding: 0 6px;
}

.snap label {
  display: flex;
  gap: 5px;
  align-items: center;
  height: 19px;
}

.snap input {
  appearance: none;
  width: 15px;
  height: 15px;
  border: 1px solid #aaa;
  border-radius: 3px;
  background: #f5f5f5;
}

.snap .combo {
  --chevron: #aaa;
  width: 150px;
  height: 28px;
  margin-top: 8px;
  border: 3px solid #fff;
  padding-left: 2px;
  background-color: #f3f3f3;
  color: #808080;
  opacity: 1;
}

.clock {
  width: 240px;
  padding: 7px 1px;
}

.time-field {
  display: flex;
  border: 2px solid #f5f5f5;
  border-top-color: #8a8a8a;
  border-left-color: #c5c5c5;
  background: #b0b0b0;
  color: #00008f;
}

.time-field span {
  flex: none;
  text-align: center;
}

.time-field .digit {
  background: #9d9d9d;
}

.time-field button {
  display: grid;
  place-items: center;
  margin-left: auto;
  border: 1px solid #222;
  border-top-color: #ccc;
  border-left-color: #ccc;
}

.large {
  width: 233px;
  height: 41px;
  padding: 1px 1px 1px 2px;
  font-size: 27px;
  line-height: 37px;
}

.large .digit {
  width: 21px;
}

.large .unit-h {
  width: 31px;
}

.large .unit-m {
  width: 38px;
}

.large .unit-s {
  width: 23px;
}

.large button {
  width: 8px;
}

.selection {
  display: flex;
  gap: 5px;
  width: 235px;
  padding: 2px 5px 0 8px;
  border-right: 1px solid #171717;
}

.selection-side {
  display: flex;
  flex-direction: column;
  align-items: flex-end;
  gap: 4px;
  width: 61px;
}

.selection-side button {
  width: 20px;
  height: 20px;
}

.selection-side svg {
  width: 18px;
  height: 18px;
  fill: none;
  stroke: #eee;
}

.selection-times {
  display: flex;
  flex-direction: column;
  gap: 1px;
  padding-top: 1px;
}

.small {
  width: 156px;
  height: 23px;
  padding: 0 0 0 2px;
  font-size: 14px;
  line-height: 20px;
}

.small .digit {
  width: 11px;
}

.small .unit-h {
  width: 12px;
}

.small .unit-m {
  width: 19px;
}

.small .dot {
  width: 4px;
}

.small .unit-s {
  width: 11px;
}

.small button {
  width: 9px;
}

.play-speed {
  flex: 1;
}

.play-row {
  display: flex;
  height: 28px;
  border-bottom: 1px solid #171717;
}

.small-play {
  width: 25px;
  height: 25px;
  margin: 1px 3px 1px 2px;
}

.small-play svg {
  fill: #52d921;
  stroke: none;
}

.speed {
  width: 144px;
  padding: 2px 3px 0;
}

.speed .slider-labels {
  padding: 0;
}

.speed .knob {
  display: block;
  width: 138px;
  margin-top: -3px;
}

.speed + .meter-end {
  width: 7px;
}

.status {
  display: flex;
  height: 28px;
  padding-left: 9px;
  background: #efefef;
  color: #111;
  line-height: 32px;
}

.status span {
  padding-left: 4px;
  border-left: 1px solid #ccc;
}

.status-a {
  width: 205px;
}

.status-b {
  flex: 1;
}

.status-c {
  width: 177px;
}

.taskbar {
  display: flex;
  align-items: center;
  height: 59px;
  background: linear-gradient(90deg, #1b212d 0 14%, #112256 19%, #101d63 40%, #101f5f 52%, #1b2143 57%, #102060 64%, #14204c 72%, #1a2230 79%);
  color: #fff;
}

.weather {
  display: flex;
  flex: 1;
  gap: 4px;
  padding-left: 24px;
  font-size: 15px;
}

.weather svg {
  width: 36px;
  height: 36px;
}

.weather span {
  color: #c9ccd2;
}

.apps {
  display: flex;
  align-items: center;
}

.apps button {
  display: grid;
  place-items: center;
  width: 55px;
  height: 59px;
}

.apps svg {
  width: 30px;
  height: 30px;
}

.apps .running {
  background: linear-gradient(#8e929c, #8e929c) 50% 51px / 8px 4px no-repeat;
}

.apps .search {
  display: flex;
  align-items: center;
  justify-content: center;
  gap: 6px;
  width: 125px;
  height: 40px;
  margin: 0 5px;
  border: 1px solid #2a3a72;
  border-radius: 20px;
  background: #202f69;
}

.search svg {
  width: 18px;
  height: 18px;
  fill: none;
  stroke: #fff;
  stroke-width: 2;
}

.tray {
  display: flex;
  flex: 1;
  align-items: center;
  justify-content: flex-end;
  gap: 10px;
  padding-right: 24px;
}

.tray svg {
  width: 20px;
  height: 20px;
  fill: none;
  stroke: #fff;
  stroke-width: 1.6;
}

.tray svg:first-child {
  margin-right: 10px;
}

.tray .cloud {
  margin-right: 10px;
  stroke: none;
}

.tray .fill {
  fill: #fff;
  stroke: none;
}

.tray .faint {
  stroke: #6b7080;
}

.tray p {
  margin-left: 10px;
  font-size: 15px;
  text-align: right;
}

.tray .bell {
  margin-left: -1px;
  fill: #7fe6ff;
  stroke: none;
}

.dialog {
  position: absolute;
  left: 144px;
  width: 373px;
  height: 236px;
  border-radius: 9px;
  background: #f0f0f0;
  box-shadow: 0 8px 28px rgba(0, 0, 0, 0.35);
  color: #111;
  font-size: 15px;
}

.dialog-0 {
  top: 190px;
}

.dialog-1 {
  top: 550px;
}

.dialog-title {
  display: flex;
  align-items: center;
  height: 38px;
  padding-right: 1px;
  border-radius: 9px 9px 0 0;
  background: #f3f3f3;
}

.dialog-title strong {
  flex: 1;
  padding-left: 10px;
  font-size: 14px;
  font-weight: 800;
  color: #929292;
}

.dialog-title button {
  display: grid;
  place-items: center;
  width: 58px;
  height: 36px;
}

.dialog-buttons {
  display: grid;
  grid-template-columns: 142px 111px 91px;
  gap: 9px;
  padding: 5px 6px 0;
  font-size: 14px;
}

.dialog-buttons button {
  height: 26px;
  border: 1px solid #ccc;
  border-radius: 4px;
  background: #fdfdfd;
}

.dialog-row {
  display: flex;
  align-items: center;
  justify-content: center;
  gap: 8px;
  height: 29px;
  margin-top: 16px;
}

.dialog-row input {
  width: 94px;
  height: 29px;
  padding: 0 0 2px 6px;
  border: 1px solid #e9e9e9;
  border-bottom-color: #858585;
  border-radius: 2px;
  background: #fff;
  font-size: 14px;
}

.gain {
  display: block;
  width: 343px;
  margin: 15px 0 -4px 15px;
}

.dialog .gain {
  height: 22px;
}

.gain::-webkit-slider-runnable-track {
  height: 22px;
  background:
    linear-gradient(#e7e7e7, #e7e7e7) 50% 9px / calc(100% - 2px) 3px no-repeat,
    linear-gradient(#d2d2d2, #d2d2d2) 50% 8px / 100% 5px no-repeat;
}

.gain::-webkit-slider-thumb {
  appearance: none;
  width: 13px;
  height: 23px;
  background: #0078d7;
  clip-path: polygon(0 0, 100% 0, 100% 72%, 50% 100%, 0 72%);
}

.dialog-check {
  display: flex;
  align-items: center;
  justify-content: center;
  gap: 4px;
  height: 20px;
  margin: 15px 10px 0 0;
}

.dialog-check input {
  appearance: none;
  width: 16px;
  height: 16px;
  border: 1px solid #5f5f5f;
  border-radius: 3px;
  background: #f7f7f7;
}
</style>
